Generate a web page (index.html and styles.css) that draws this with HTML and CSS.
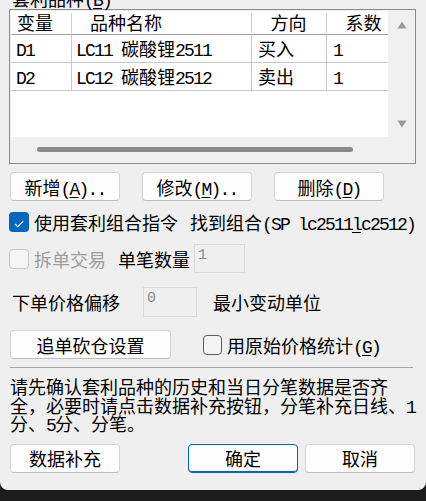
FILE: index.html
```html
<!DOCTYPE html>
<html lang="zh-CN">
<head>
<meta charset="utf-8">
<title>套利品种</title>
<link rel="stylesheet" href="styles.css">
</head>
<body>
<div class="dlg">
  <div class="grp-label">套利品种<span class="m">(<u>B</u>)</span></div>
  <div class="listbox">
    <div class="list-main">
      <div class="list-view">
        <div class="row hdr">
          <div class="c c1">变量</div>
          <div class="c c2">品种名称</div>
          <div class="c c3">方向</div>
          <div class="c c4">系数</div>
        </div>
        <div class="row body">
          <div class="c c1"><span class="m">D1</span></div>
          <div class="c c2"><span class="m">LC11 </span>碳酸锂<span class="m">2511</span></div>
          <div class="c c3">买入</div>
          <div class="c c4"><span class="m">1</span></div>
        </div>
        <div class="row body">
          <div class="c c1"><span class="m">D2</span></div>
          <div class="c c2"><span class="m">LC12 </span>碳酸锂<span class="m">2512</span></div>
          <div class="c c3">卖出</div>
          <div class="c c4"><span class="m">1</span></div>
        </div>
      </div>
      <div class="vscroll">
        <svg width="10" height="8" viewBox="0 0 10 8"><path d="M5 0.5 L9.6 7.5 L0.4 7.5 Z" fill="#9a9a9a"/></svg>
        <svg width="10" height="8" viewBox="0 0 10 8"><path d="M0.4 0.5 L9.6 0.5 L5 7.5 Z" fill="#9a9a9a"/></svg>
      </div>
    </div>
    <div class="hscroll"><div class="thumb"></div></div>
  </div>

  <div class="btnrow">
    <div class="btn w110"><span>新增<span class="m">(<u>A</u>)..</span></span></div>
    <div class="btn w110 ml22"><span>修改<span class="m">(<u>M</u>)..</span></span></div>
    <div class="btn w110 ml22"><span>删除<span class="m">(<u>D</u>)</span></span></div>
  </div>

  <div class="line r1">
    <div class="chk on"><svg width="20" height="20" viewBox="0 0 20 20"><path d="M6 12 L8.8 14.6 L14.2 9.2" fill="none" stroke="#fff" stroke-width="1.2"/></svg></div>
    <span class="lbl">使用套利组合指令</span>
    <span class="found">找到组合<span class="m">(SP lc2511<u>l</u>c2512)</span></span>
  </div>

  <div class="line r2">
    <div class="chk dis"></div>
    <span class="lbl gray">拆单交易</span>
    <span class="qty">单笔数量</span>
    <div class="inp w51"><span class="v">1</span></div>
  </div>

  <div class="line r3">
    <span class="off">下单价格偏移</span>
    <div class="inp w54 ml23"><span class="v">0</span></div>
    <span class="ml16">最小变动单位</span>
  </div>

  <div class="line r4">
    <div class="btn w161">追单砍仓设置</div>
    <div class="chk off ml32"></div>
    <span class="lbl">用原始价格统计<span class="m">(<u>G</u>)</span></span>
  </div>

  <div class="sep"></div>

  <p class="note">请先确认套利品种的历史和当日分笔数据是否齐<br>全，必要时请点击数据补充按钮，分笔补充日线、<span class="m">1</span><br>分、<span class="m">5</span>分、分笔。</p>

  <div class="btnrow bottom">
    <div class="btn w110">数据补充</div>
    <div class="btn w110 primary ml68">确定</div>
    <div class="btn w110 ml7">取消</div>
  </div>
</div>
</body>
</html>
```
FILE: styles.css
```css
* { box-sizing: border-box; }
html, body { margin: 0; padding: 0; }
body {
  width: 426px;
  height: 501px;
  overflow: hidden;
  background: #1c1c1c;
  font-family: "Noto Sans CJK SC", sans-serif;
  font-size: 18px;
  color: #000;
}
.dlg {
  background: #efefef;
  height: 490px;
  border-radius: 0 0 8px 8px;
  overflow: hidden;
}
.m {
  font-family: "Liberation Mono", monospace;
  letter-spacing: -1.8px;
  white-space: pre;
  line-height: 0;
}
u { text-underline-offset: 2px; }

.grp-label {
  margin: -11px 0 2px 12px;
  height: 18px;
  line-height: 18px;
  white-space: nowrap;
}

.listbox {
  margin-left: 9px;
  width: 407px;
  height: 155px;
  border: 1px solid #8a8a8a;
  padding: 1px;
  background: #f0f0f0;
  display: flex;
  flex-direction: column;
}
.list-main { display: flex; height: 126px; }
.list-view { width: 377px; background: #fff; overflow: hidden; }
.vscroll {
  flex: 1;
  display: flex;
  flex-direction: column;
  justify-content: space-between;
  align-items: center;
  padding: 10px 0 9px 1px;
}
.vscroll svg { display: block; }
.hscroll { flex: 1; padding: 10px 0 0 26px; }
.thumb { width: 316px; height: 5px; border-radius: 3px; background: #8a8a8a; }

.row {
  display: grid;
  grid-template-columns: 60px 180px 75px 75px;
  width: 390px;
}
.c {
  display: block;
  white-space: nowrap;
  overflow: hidden;
}
.hdr { height: 24px; border-bottom: 1px solid #a0a0a0; }
.hdr .c { line-height: 23px; }
.hdr .c2, .hdr .c3, .hdr .c4 {
  background: linear-gradient(#cfcfcf, #cfcfcf) no-repeat 0 2px / 1px 20px;
}
.hdr .c1 { padding-left: 6px; }
.hdr .c2 { padding-left: 19px; }
.hdr .c3, .hdr .c4 { text-align: center; }

.body { height: 28px; border-bottom: 1px solid #c8c8c8; }
.body .c { line-height: 27px; }
.body .c2, .body .c3, .body .c4 { border-left: 1px solid #c8c8c8; }
.body .c1 { padding-left: 5px; }
.body .c2 { padding-left: 4px; }
.body .c3 { padding-left: 6px; }
.body .c4 { padding-left: 6px; }

.btnrow { display: flex; margin: 8px 0 0 10px; }
.btn {
  height: 29px;
  background: #fdfdfd;
  border: 1px solid #d3d3d3;
  border-bottom-color: #bdbdbd;
  border-radius: 4px;
  display: flex;
  align-items: center;
  justify-content: center;
  white-space: nowrap;
  line-height: 18px;
}
.btn.primary { border-color: #0067c0; box-shadow: inset 0 -1px 0 #0067c0; }
.w110 { width: 110px; }
.w161 { width: 161px; }
.ml22 { margin-left: 22px; }
.ml68 { margin-left: 68px; }
.ml7 { margin-left: 7px; }
.ml23 { margin-left: 23px; }
.ml16 { margin-left: 16px; }
.ml32 { margin-left: 32px; }

.line { display: flex; align-items: center; white-space: nowrap; line-height: 18px; }
.r1 { margin: 11px 0 0 9px; height: 20px; }
.r2 { margin: 12px 0 0 9px; height: 29px; }
.r3 { margin: 14px 0 0 12px; height: 30px; }
.r4 { margin: 13px 0 0 10px; height: 29px; }

.chk { width: 20px; height: 20px; border-radius: 4px; flex: none; }
.chk svg { display: block; }
.chk.on { background: #0067c0; }
.chk.dis { border: 1px solid #c9c9c9; background: #f6f6f6; }
.chk.off { width: 19px; border: 1px solid #5c5c5c; background: #f4f4f4; }
.lbl { margin-left: 5px; }
.gray { color: #9d9d9d; }
.found { margin-left: 12px; }
.qty { margin-left: 12px; }

.inp {
  height: 100%;
  border: 1px solid #dadada;
  background: #efefef;
  padding: 2px 0 0 3px;
  align-self: stretch;
}
.inp .v {
  display: block;
  font-family: "Liberation Mono", monospace;
  font-size: 15px;
  line-height: 18px;
  color: #8c8c8c;
}
.w51 { width: 51px; margin-left: 4px; }
.w54 { width: 54px; }

.sep { margin: 8px 0 0 10px; width: 403px; height: 1px; background: #a6a6a6; }

.note {
  margin: 9px 0 0 10px;
  line-height: 18.5px;
  white-space: nowrap;
}
.bottom { margin-top: 11px; }
```
